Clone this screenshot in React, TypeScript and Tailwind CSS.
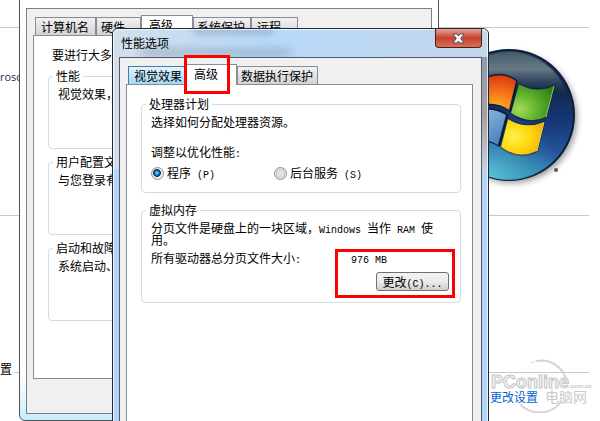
import { ReactNode } from 'react'
import clsx from 'clsx'

// Half-width Latin text that sits inside the 12px Chinese text
function Latin({ children }: { children: ReactNode }) {
  return <span className="font-['Liberation_Mono',monospace] text-[10px] leading-[0] whitespace-pre">{children}</span>
}

function Tab({ label, active, hot, className, children }: {
  label: string
  active?: boolean
  hot?: boolean
  className?: string
  children?: ReactNode
}) {
  return (
    <button
      role="tab"
      aria-selected={!!active}
      className={clsx(
        'shrink-0 border border-b-0 text-left whitespace-nowrap',
        active && 'relative z-10 -mb-px h-[21px] border-[#898c95] bg-white pb-[2px]',
        !active && 'h-[18px] pt-px',
        !active && hot && 'border-[#3c7fb1] bg-gradient-to-b from-[#e4f4fc] to-[#a0d8f5]',
        !active && !hot && 'border-[#898c95] bg-gradient-to-b from-[#f2f2f2] to-[#d2d2d2]',
        className
      )}
    >
      {label}
      {children}
    </button>
  )
}

function Group({ title, className, children }: { title: string; className?: string; children?: ReactNode }) {
  return (
    <fieldset className={clsx('relative min-w-0 rounded-[4px] border border-[#d0dce6] pl-[9px]', className)}>
      <legend className="-ml-[5px] px-[3px] leading-3 whitespace-nowrap">{title}</legend>
      {children}
    </fieldset>
  )
}

function Radio({ label, hotkey, defaultChecked }: { label: string; hotkey: string; defaultChecked?: boolean }) {
  return (
    <label className="flex w-[123px] items-center gap-[3px] leading-[14px]">
      <input
        type="radio"
        name="schedule"
        defaultChecked={defaultChecked}
        className="h-[13px] w-[13px] shrink-0 appearance-none rounded-full border border-[#8e8f8f] bg-[radial-gradient(circle,#e2e2e2_0_40%,#c4c4c4_55%,#f4f4f4_70%)] checked:bg-[radial-gradient(circle_at_45%_45%,#5fc8f2_0_10%,#1a6fa6_25%,#0d3a5c_42%,#dfe8ee_50%,#f4f4f4_70%)]"
      />
      <span>{label}<Latin> ({hotkey})</Latin></span>
    </label>
  )
}

function WindowsLogo() {
  return (
    <svg viewBox="0 0 150 150" className="h-[150px] w-[150px]" role="img" aria-label="Windows">
      <defs>
        <linearGradient id="orb" x1="0" y1="0" x2="0" y2="1">
          <stop offset="0" stopColor="#2b4459" />
          <stop offset="0.3" stopColor="#12284c" />
          <stop offset="0.55" stopColor="#173777" />
          <stop offset="0.8" stopColor="#25559b" />
          <stop offset="1" stopColor="#3a8fbb" />
        </linearGradient>
        <radialGradient id="glow" cx="0.35" cy="1" r="0.55">
          <stop offset="0" stopColor="#58c4d4" />
          <stop offset="1" stopColor="#3fa5c4" stopOpacity="0" />
        </radialGradient>
        <linearGradient id="shine" x1="0" y1="0" x2="0" y2="1">
          <stop offset="0" stopColor="#455b69" />
          <stop offset="0.4" stopColor="#667985" />
          <stop offset="1" stopColor="#14284a" stopOpacity="0.2" />
        </linearGradient>
        <radialGradient id="red" cx="0.6" cy="0.9" r="0.9">
          <stop offset="0" stopColor="#ffb21c" />
          <stop offset="0.5" stopColor="#f3701a" />
          <stop offset="1" stopColor="#d93a0c" />
        </radialGradient>
        <radialGradient id="green" cx="0.2" cy="0.7" r="0.9">
          <stop offset="0" stopColor="#a6dc58" />
          <stop offset="0.5" stopColor="#5cb02a" />
          <stop offset="1" stopColor="#2e8014" />
        </radialGradient>
        <linearGradient id="blue" x1="0" y1="0" x2="1" y2="1">
          <stop offset="0" stopColor="#a9cbe8" />
          <stop offset="1" stopColor="#3d76b8" />
        </linearGradient>
        <radialGradient id="yellow" cx="0.3" cy="0.5" r="0.8">
          <stop offset="0" stopColor="#fff04a" />
          <stop offset="0.5" stopColor="#ffd60c" />
          <stop offset="1" stopColor="#f2a40a" />
        </radialGradient>
        <filter id="shadow" x="-20%" y="-20%" width="140%" height="140%">
          <feGaussianBlur stdDeviation="3" />
        </filter>
      </defs>
      <circle cx="77" cy="78" r="65" fill="#000" opacity="0.4" filter="url(#shadow)" />
      <circle cx="74" cy="75" r="66" fill="#0a1d3c" />
      <circle cx="74" cy="75" r="64" fill="url(#orb)" />
      <circle cx="74" cy="75" r="65" fill="url(#glow)" />
      <path d="M16 54 A61 61 0 0 1 132 54 Q105 48 74 52 Q44 58 16 54Z" fill="url(#shine)" />
      <g stroke="#0a1d3c" strokeWidth="3" strokeLinejoin="round">
        <path d="M45 42 Q64 29 81 41 L75 70 Q58 58 36 69Z" />
        <path d="M84 44 Q100 54 119 46 L111 77 Q94 85 76 73Z" strokeOpacity="0.4" />
        <path d="M35 74 Q54 65 72 75 L64 105 Q48 95 28 103Z" />
        <path d="M73 79 Q90 90 109 82 L102 111 Q84 120 66 107Z" strokeOpacity="0.4" />
      </g>
      <path d="M45 42 Q64 29 81 41 L74 70 Q58 58 36 69Z" fill="url(#red)" />
      <path d="M84 44 Q100 54 119 46 L111 77 Q94 85 76 73Z" fill="url(#green)" />
      <path d="M119 46 L111 77" stroke="#8cc75e" />
      <path d="M35 74 Q54 65 71 75 L63 105 Q48 95 28 103Z" fill="url(#blue)" />
      <path d="M73 79 Q90 90 109 82 L102 111 Q84 120 66 107Z" fill="url(#yellow)" />
      <path d="M109 82 L102 111" stroke="#d8cf5a" />
      <circle cx="121" cy="130" r="2" fill="#555" />
    </svg>
  )
}

function Watermark() {
  return (
    <svg viewBox="0 0 104 56" className="absolute top-[357px] right-[7px] h-[56px] w-[104px]" role="img" aria-label="PConline">
      <g fill="none" stroke="#d4d4d4" strokeLinecap="round">
        <path d="M42 6 A26 26 0 0 1 76 18" strokeWidth="1" strokeDasharray="4 3" />
        <path d="M48 4 A26 26 0 0 1 78 26" strokeWidth="2" />
        <path d="M32 48 A27 27 0 0 0 72 45" strokeWidth="2" />
      </g>
      <g fill="#c6c6c6" fontFamily="Liberation Sans, sans-serif" fontWeight="700">
        <text x="2" y="31" fontSize="18" fill="#f6f6f6" stroke="#c6c6c6">PConline</text>
        <text x="80" y="31" fontSize="6">.com.cn</text>
      </g>
      <text x="56" y="45" fontFamily="Noto Sans CJK SC, sans-serif" fontSize="14" fontWeight="400" fill="#cacaca">电脑网</text>
    </svg>
  )
}

// Control panel page behind both windows
function SystemPage() {
  return (
    <div>
      <div className="mr-[11px] h-7 border-b border-[#c6c9cc]" />
      <div className="mr-[11px] flex h-[188px] items-start justify-between border-b border-[#c6c9cc]">
        <span className="pt-[41px] font-['Open_Sans',sans-serif] text-[11px] leading-4 text-[#1c2c4c]">rosc</span>
        <div className="mt-3 mr-1">
          <WindowsLogo />
        </div>
      </div>
      <div className="mt-[145px] mr-[11px] flex items-center gap-0.5 leading-4">
        <span>置</span>
        <hr className="mt-[7px] flex-1 border-[#c6c9cc]" />
      </div>
      <div className="mr-[62px] text-right leading-4">
        <a href="#settings" className="relative z-10 top-3 text-[#0066cc]">更改设置</a>
      </div>
      <Watermark />
    </div>
  )
}

function SystemProperties() {
  return (
    <div className="absolute -top-4 left-[19px] flex h-[437px] w-[420px] flex-col rounded-b-md border border-[#4d5257] bg-gradient-to-b from-white from-90% to-[#c5ecfb] px-[6px] pt-[23px] pb-[6px]">
      <div className="flex flex-1 flex-col border border-[#7b8085] bg-[#f0f0f0] px-[6px] pt-[6px] pb-[34px]">
        <div role="tablist" className="ml-[2px] flex items-end">
          <Tab label="计算机名" className="w-[61px] pl-[5px]" />
          <Tab label="硬件" className="w-[45px] pl-[4px]" />
          <Tab label="高级" active className="w-[52px] pl-[7px]" />
          <Tab label="系统保护" className="w-[58px] pl-[3px]" />
          <Tab label="远程" className="w-[47px] pl-[5px]" />
        </div>
        <div className="flex-1 border border-[#898c95] bg-white pt-3 pl-[14px]">
          <p className="pl-1 leading-[14px]">要进行大多</p>
          <Group title="性能" className="mt-2 h-[79px] pt-[5px]">
            <p className="leading-[14px]">视觉效果，</p>
          </Group>
          <Group title="用户配置文" className="mt-[7px] h-[79px] pt-[5px]">
            <p className="leading-[14px]">与您登录有</p>
          </Group>
          <Group title="启动和故障" className="mt-[7px] h-[79px] pt-[5px]">
            <p className="leading-[14px]">系统启动、</p>
          </Group>
        </div>
      </div>
    </div>
  )
}

function PerformanceOptions() {
  return (
    <div className="absolute top-7 -bottom-8 left-[112px] z-20 flex w-[377px] flex-col overflow-hidden rounded-md border border-[#1d2936] bg-[#b4d5f7]">
      {/* Glass title bar and edges */}
      <div className="absolute inset-x-0 top-0 h-[140px] bg-gradient-to-r from-[#d3dfea] via-[#b9dafb] via-40% to-[#c3d6ea]" />
      <div className="absolute top-0 left-[80px] h-[5px] w-[80px] bg-[#6f8193]/50 blur-[3px]" />
      <div className="absolute top-[20px] left-[28px] h-[7px] w-[150px] bg-[#6f8193]/45 blur-[4px]" />
      <div className="absolute top-[28px] right-0 h-[116px] w-[6px] bg-gradient-to-b from-[#8d9dae] via-[#a9a09f] to-[#c3d3e4]" />
      <div className="absolute inset-0 rounded-md border border-white/70" />

      <div className="relative flex h-7 shrink-0 items-start justify-between pr-[6px] pl-2">
        <h1 className="pt-[6px] leading-4">性能选项</h1>
        <button aria-label="关闭" className="flex h-[19px] w-[47px] items-center justify-center rounded-b-[4px] border border-t-0 border-[#4e1a1a] bg-gradient-to-b from-[#e5a197] via-[#c5402c] via-50% to-[#d8705a]">
          <svg viewBox="0 0 13 11" className="h-[11px] w-[13px]" aria-hidden="true">
            <path d="M1 1h4l1.500 2L8 1h4L8.700 5.500 12 10H8L6.500 8 5 10H1l3.300-4.500Z" fill="#fff" stroke="#4a4f5c" />
          </svg>
        </button>
      </div>

      <div className="relative mx-[6px] flex flex-1 flex-col border border-[#4f5a66] bg-[#f0f0f0] pt-[6px] pr-[8px] pl-[6px]">
        <div role="tablist" className="ml-[2px] flex items-end">
          <Tab label="视觉效果" hot className="w-[58px] pl-[5px]" />
          <Tab label="高级" active className="w-[51px] pl-[7px]">
            <span className="pointer-events-none absolute -top-[10px] -left-[3px] h-[39px] w-[46px] border-3 border-[#fe0000]" />
          </Tab>
          <Tab label="数据执行保护" className="w-[81px] pl-[3px]" />
        </div>

        <div className="flex-1 border border-[#898c95] bg-white pt-[13px] pr-[11px] pl-[14px]">
          <Group title="处理器计划" className="pt-[5px] pb-3">
            <p className="leading-[14px]">选择如何分配处理器资源。</p>
            <p className="mt-4 leading-[14px]">调整以优化性能<Latin>:</Latin></p>
            <div className="mt-[7px] flex">
              <Radio label="程序" hotkey="P" defaultChecked />
              <Radio label="后台服务" hotkey="S" />
            </div>
          </Group>

          <Group title="虚拟内存" className="mt-[11px] pt-[6px] pb-[11px]">
            <p className="pr-[22px] leading-3">
              分页文件是硬盘上的一块区域，<Latin>Windows </Latin>当作<Latin> RAM </Latin>使用。
            </p>
            <div className="mt-[5px] flex leading-[14px]">
              <span className="w-[200px]">所有驱动器总分页文件大小<Latin>:</Latin></span>
              <span><Latin>976 MB</Latin></span>
            </div>
            <div className="mt-[7px] mr-[11px] flex justify-end">
              <button className="h-[19px] w-[73px] rounded-[3px] border border-[#707070] bg-gradient-to-b from-[#f2f2f2] via-[#ebebeb] via-50% to-[#cfcfcf] text-center leading-4 whitespace-nowrap">
                更改<Latin>(C)...</Latin>
              </button>
            </div>
            <span className="pointer-events-none absolute right-[5px] bottom-1 h-[49px] w-[120px] border-3 border-[#fe0000]" />
          </Group>
        </div>
      </div>
    </div>
  )
}

export default function App() {
  return (
    <div className="relative h-screen overflow-hidden bg-white font-['Noto_Sans_CJK_SC',sans-serif] text-xs text-black">
      <SystemPage />
      <SystemProperties />
      <PerformanceOptions />
    </div>
  )
}
